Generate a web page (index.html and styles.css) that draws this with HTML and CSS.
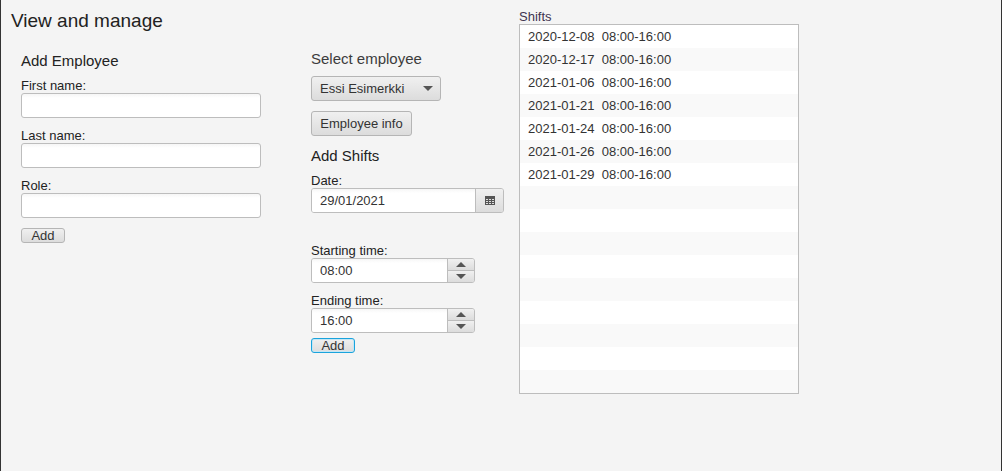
FILE: index.html
```html
<!DOCTYPE html>
<html lang="en">
  <head>
    <meta charset="UTF-8" />
    <title>View and manage</title>
    <link rel="stylesheet" href="styles.css">
  </head>
  <body>
    <div class="window">
      <div class="left">
        <h1>View and manage</h1>
        <div class="employee-form">
          <h2>Add Employee</h2>
          <div class="field">
            <label>First name:</label>
            <input class="text-input" type="text">
          </div>
          <div class="field">
            <label>Last name:</label>
            <input class="text-input" type="text">
          </div>
          <div class="field">
            <label>Role:</label>
            <input class="text-input" type="text">
          </div>
          <button class="btn small">Add</button>
        </div>
      </div>

      <div class="middle">
        <h2 class="muted">Select employee</h2>
        <div class="btn select">
          <span>Essi Esimerkki</span>
          <span class="arrow down"></span>
        </div>
        <button class="btn info">Employee info</button>
        <h2 class="shifts-title">Add Shifts</h2>
        <div class="date-field">
          <label>Date:</label>
          <div class="combo date">
            <input class="combo-input" type="text" value="29/01/2021">
            <div class="date-btn">
              <svg width="10" height="9" viewBox="0 0 10 9">
                <rect width="10" height="9" fill="#555"/>
                <path d="M1 3h2v1H1zM4 3h2v1H4zM7 3h2v1H7zM1 5h2v1H1zM4 5h2v1H4zM7 5h2v1H7zM1 7h2v1H1zM4 7h2v1H4zM7 7h2v1H7z" fill="#ddd"/>
              </svg>
            </div>
          </div>
        </div>
        <div class="time-field first">
          <label>Starting time:</label>
          <div class="combo time">
            <input class="combo-input" type="text" value="08:00">
            <div class="spin">
              <div class="spin-btn"><span class="arrow up"></span></div>
              <div class="spin-btn"><span class="arrow down"></span></div>
            </div>
          </div>
        </div>
        <div class="time-field">
          <label>Ending time:</label>
          <div class="combo time">
            <input class="combo-input" type="text" value="16:00">
            <div class="spin">
              <div class="spin-btn"><span class="arrow up"></span></div>
              <div class="spin-btn"><span class="arrow down"></span></div>
            </div>
          </div>
        </div>
        <button class="btn small focused">Add</button>
      </div>

      <div class="right">
        <label class="list-label">Shifts</label>
        <ul class="list">
          <li>2020-12-08&nbsp; 08:00-16:00</li>
          <li>2020-12-17&nbsp; 08:00-16:00</li>
          <li>2021-01-06&nbsp; 08:00-16:00</li>
          <li>2021-01-21&nbsp; 08:00-16:00</li>
          <li>2021-01-24&nbsp; 08:00-16:00</li>
          <li>2021-01-26&nbsp; 08:00-16:00</li>
          <li>2021-01-29&nbsp; 08:00-16:00</li>
          <li></li>
          <li></li>
          <li></li>
          <li></li>
          <li></li>
          <li></li>
          <li></li>
          <li></li>
          <li></li>
        </ul>
      </div>
    </div>
  </body>
</html>
```

FILE: styles.css
```css
* {
  box-sizing: border-box;
}
html,
body {
  height: 100%;
  margin: 0;
  padding: 0;
}
body {
  font-family: "Liberation Sans", Arial, sans-serif;
  font-size: 13px;
  color: #222;
  background: #f4f4f4;
  overflow: hidden;
}
.window {
  display: flex;
  height: 471px;
  border-left: 1px solid #333;
  border-right: 1px solid #333;
}
h1 {
  font-size: 19px;
  font-weight: 400;
  line-height: 21px;
  margin: 0;
  padding: 10px 0 0 10px;
}
h2 {
  font-size: 15px;
  font-weight: 400;
  line-height: 17px;
  margin: 0;
}
label {
  display: block;
  line-height: 15px;
}
.left {
  width: 310px;
}
.employee-form {
  width: 260px;
  padding: 21px 0 0 20px;
}
.employee-form h2 {
  margin-bottom: 9px;
}
.field {
  margin-bottom: 10px;
}
.text-input {
  display: block;
  width: 240px;
  height: 25px;
  border: 1px solid #bdbdbd;
  border-radius: 3px;
  background: linear-gradient(#f6f6f6, #fff 4px);
  outline: 0;
}
.btn {
  display: block;
  font-family: inherit;
  font-size: 13px;
  color: #333;
  padding: 0;
  border: 1px solid #b5b5b5;
  border-radius: 3px;
  background: linear-gradient(#f0f0f0, #dcdcdc);
}
.btn.small {
  width: 44px;
  height: 15px;
  line-height: 13px;
  text-align: center;
}
.btn.focused {
  border-color: #1aa3dc;
  box-shadow: inset 0 0 0 1px #c4e6f5;
  margin-top: 5px;
}
.middle {
  width: 208px;
  padding-top: 50px;
}
.muted {
  color: #3c3c3c;
}
.select {
  display: flex;
  align-items: center;
  justify-content: space-between;
  width: 130px;
  height: 25px;
  margin-top: 9px;
  padding: 0 7px 0 8px;
}
.info {
  width: 101px;
  height: 25px;
  margin-top: 10px;
}
.arrow {
  display: block;
  width: 0;
  height: 0;
  border-left: 5px solid transparent;
  border-right: 5px solid transparent;
}
.arrow.down {
  border-top: 5px solid #555;
}
.arrow.up {
  border-bottom: 5px solid #555;
}
.shifts-title {
  margin-top: 11px;
}
.date-field {
  margin-top: 9px;
}
.combo {
  display: flex;
  height: 25px;
  border: 1px solid #bdbdbd;
  border-radius: 3px;
  overflow: hidden;
}
.combo-input {
  flex: 1;
  min-width: 0;
  border: 0;
  outline: 0;
  padding: 0 8px;
  font-family: inherit;
  font-size: 13px;
  color: #333;
  background: linear-gradient(#f6f6f6, #fff 4px);
}
.date {
  width: 193px;
}
.date-btn {
  display: flex;
  align-items: center;
  justify-content: center;
  width: 28px;
  border-left: 1px solid #bdbdbd;
  background: linear-gradient(#f0f0f0, #dcdcdc);
}
.time {
  width: 164px;
}
.spin {
  display: flex;
  flex-direction: column;
  width: 27px;
  border-left: 1px solid #bdbdbd;
}
.spin-btn {
  display: flex;
  flex: 1;
  align-items: center;
  justify-content: center;
  background: linear-gradient(#f0f0f0, #dcdcdc);
}
.spin-btn + .spin-btn {
  border-top: 1px solid #bdbdbd;
}
.time-field {
  margin-top: 10px;
}
.time-field.first {
  margin-top: 30px;
}
.right {
  width: 280px;
  padding-top: 9px;
}
.list-label {
  color: #3f3550;
}
.list {
  list-style: none;
  margin: 0;
  padding: 0;
  height: 370px;
  border: 1px solid #bdbdbd;
  background: #fff;
}
.list li {
  height: 23px;
  line-height: 23px;
  padding-left: 8px;
  color: #333;
}
.list li:nth-child(even) {
  background: #f9f9f9;
}
```
